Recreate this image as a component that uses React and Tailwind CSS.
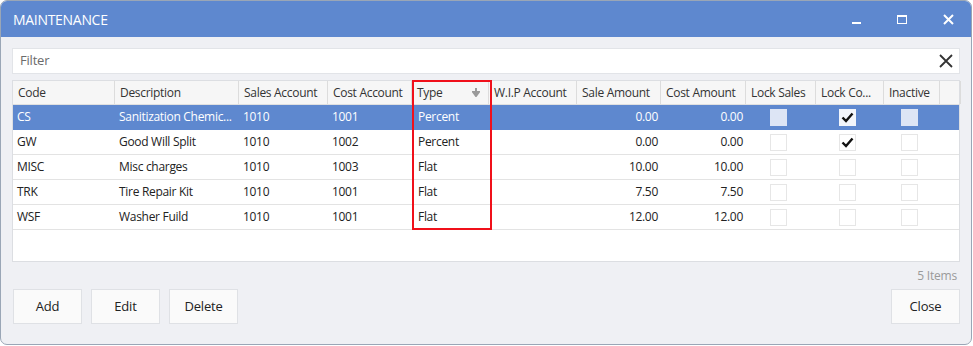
const rows = [
  { code: "CS", desc: "Sanitization Chemic...", sales: "1010", cost: "1001", type: "Percent", sale: "0.00", costAmt: "0.00", lockSales: false, lockCost: true, inactive: false },
  { code: "GW", desc: "Good Will Split", sales: "1010", cost: "1002", type: "Percent", sale: "0.00", costAmt: "0.00", lockSales: false, lockCost: true, inactive: false },
  { code: "MISC", desc: "Misc charges", sales: "1010", cost: "1003", type: "Flat", sale: "10.00", costAmt: "10.00", lockSales: false, lockCost: false, inactive: false },
  { code: "TRK", desc: "Tire Repair Kit", sales: "1010", cost: "1001", type: "Flat", sale: "7.50", costAmt: "7.50", lockSales: false, lockCost: false, inactive: false },
  { code: "WSF", desc: "Washer Fuild", sales: "1010", cost: "1001", type: "Flat", sale: "12.00", costAmt: "12.00", lockSales: false, lockCost: false, inactive: false },
];

const cols = "grid-cols-[102px_124px_89px_84px_77px_88px_84px_85px_70px_68px_56px_21px]";

function Check({ checked, selected }) {
  return (
    <div
      className={
        "w-[17px] h-[17px] flex items-center justify-center " +
        (selected ? (checked ? "bg-[#f2f5fb]" : "bg-[#dde5f5]") : "border border-[#e6e6e6] bg-white")
      }
    >
      {checked && (
        <svg width="13" height="11" viewBox="0 0 13 11">
          <path d="M1.5 5.5 L5 9 L11.5 1.5" fill="none" stroke="#111" strokeWidth="2.4" />
        </svg>
      )}
    </div>
  );
}

function Btn({ children }) {
  return (
    <button className="w-[69px] h-[35px] bg-[#fafafa] border border-[#dfe1e5] text-[13px] tracking-[-0.2px] text-[#222]">
      {children}
    </button>
  );
}

export default function App() {
  const headers = ["Code", "Description", "Sales Account", "Cost Account", "Type", "W.I.P Account", "Sale Amount", "Cost Amount", "Lock Sales", "Lock Co...", "Inactive", ""];
  return (
    <div className="w-[973px] h-[346px] bg-white" style={{ fontFamily: '"Segoe UI", "Open Sans", sans-serif' }}>
      <div className="w-[972px] h-[345px] border border-[#9aa6b6] rounded-[7px] overflow-hidden bg-[#eff0f4] flex flex-col">
        <div className="h-[36px] bg-[#5e88cf] flex items-center pl-[12px] shrink-0">
          <span className="text-white text-[14px] tracking-[-0.3px] flex-1">MAINTENANCE</span>
          <div className="flex items-center">
            <div className="w-[46px] flex justify-center pt-[8px]">
              <div className="w-[9px] h-[2px] bg-white" />
            </div>
            <div className="w-[46px] flex justify-center">
              <div className="w-[10px] h-[9px] border border-white border-t-2" />
            </div>
            <div className="w-[46px] flex justify-center">
              <svg width="11" height="11" viewBox="0 0 11 11">
                <path d="M1 1 L10 10 M10 1 L1 10" stroke="white" strokeWidth="2" />
              </svg>
            </div>
          </div>
        </div>

        <div className="flex-1 flex flex-col px-[11px] pt-[11px]">
          <div className="h-[26px] bg-white border border-[#e2e4e8] flex items-center pl-[7px] pr-[6px]">
            <span className="flex-1 text-[13px] tracking-[-0.2px] text-[#6b6b6b]">Filter</span>
            <svg width="14" height="14" viewBox="0 0 14 14">
              <path d="M1 1 L13 13 M13 1 L1 13" stroke="#333" strokeWidth="1.8" />
            </svg>
          </div>

          <div className="relative mt-[6px] h-[182px] bg-white border border-[#dcdee2] tracking-[-0.3px]">
            <div className={"grid h-[24px] bg-[#f6f6f6] border-b border-[#e0e0e0] " + cols}>
              {headers.map((h, i) => (
                <div key={i} className="border-r border-[#dcdcdc] flex items-center pl-[5px] text-[12px] text-[#333] whitespace-nowrap overflow-hidden">
                  <span className="flex-1">{h}</span>
                  {h === "Type" && (
                    <svg width="8" height="9" viewBox="0 0 8 9" className="mr-[8px]">
                      <path d="M4 0 V6 M1 4 L4 8 L7 4 Z" stroke="#9a9a9a" fill="#9a9a9a" strokeWidth="2" />
                    </svg>
                  )}
                </div>
              ))}
            </div>
            {rows.map((r, i) => {
              const sel = i === 0;
              return (
                <div
                  key={r.code}
                  className={
                    "grid h-[25px] border-b text-[12px] " + cols + " " +
                    (sel ? "bg-[#5e88cf] text-white border-[#5e88cf]" : "bg-white text-[#222] border-[#e3e3e3]")
                  }
                >
                  <div className="pl-[4px] flex items-center">{r.code}</div>
                  <div className="pl-[4px] flex items-center whitespace-nowrap overflow-hidden">{r.desc}</div>
                  <div className="pl-[4px] flex items-center">{r.sales}</div>
                  <div className="pl-[4px] flex items-center">{r.cost}</div>
                  <div className="pl-[6px] flex items-center">{r.type}</div>
                  <div />
                  <div className="pr-[3px] flex items-center justify-end">{r.sale}</div>
                  <div className="pr-[3px] flex items-center justify-end">{r.costAmt}</div>
                  <div className="pl-[24px] flex items-center"><Check checked={r.lockSales} selected={sel} /></div>
                  <div className="pl-[23px] flex items-center"><Check checked={r.lockCost} selected={sel} /></div>
                  <div className="pl-[17px] flex items-center"><Check checked={r.inactive} selected={sel} /></div>
                  <div />
                </div>
              );
            })}
            <div className="absolute left-[399px] top-[-1px] w-[80px] h-[150px] border-2 border-[#f0101a]" />
          </div>

          <div className="h-[27px] flex items-center justify-end pr-[3px] text-[12px] tracking-[-0.2px] text-[#9a9a9a]">5 Items</div>

          <div className="flex items-start">
            <div className="flex gap-[9px] flex-1 pl-[1px]">
              <Btn>Add</Btn>
              <Btn>Edit</Btn>
              <Btn>Delete</Btn>
            </div>
            <Btn>Close</Btn>
          </div>
        </div>
      </div>
    </div>
  );
}
